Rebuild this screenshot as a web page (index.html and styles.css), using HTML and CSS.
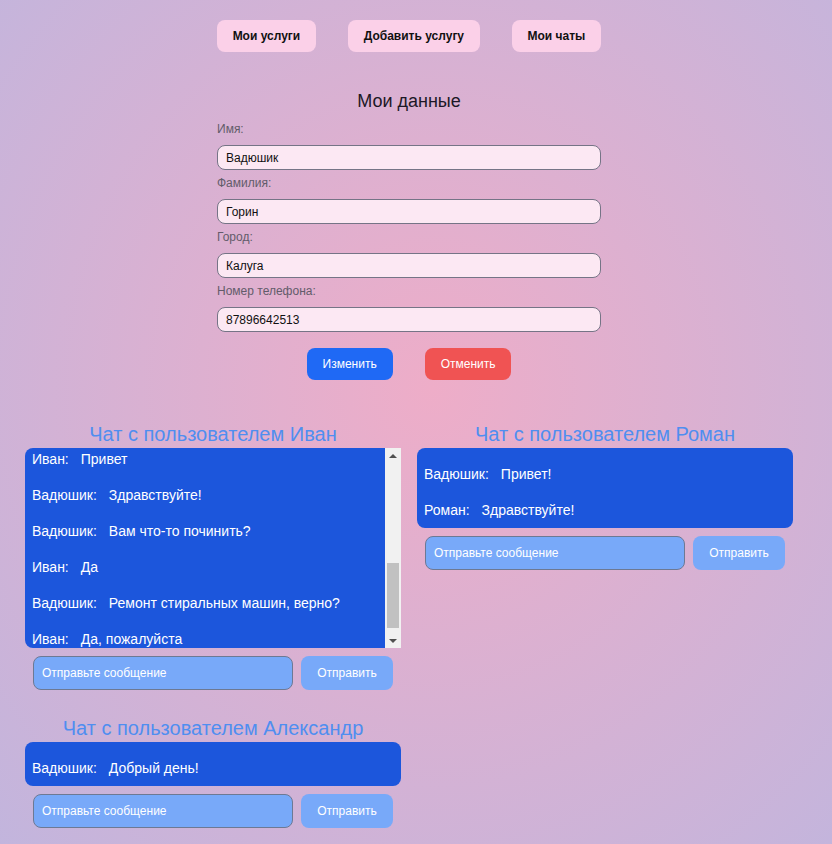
FILE: index.html
```html
<!DOCTYPE html>
<html lang="ru">
<head>
<meta charset="utf-8">
<title>Мои данные</title>
<link rel="stylesheet" href="styles.css">
</head>
<body>
<div class="page">
  <nav class="nav">
    <button class="nav-btn">Мои услуги</button>
    <button class="nav-btn">Добавить услугу</button>
    <button class="nav-btn">Мои чаты</button>
  </nav>

  <section class="profile">
    <h1 class="profile-title">Мои данные</h1>
    <label class="field-label">Имя:</label>
    <input class="field-input" type="text" value="Вадюшик">
    <label class="field-label">Фамилия:</label>
    <input class="field-input" type="text" value="Горин">
    <label class="field-label">Город:</label>
    <input class="field-input" type="text" value="Калуга">
    <label class="field-label">Номер телефона:</label>
    <input class="field-input" type="text" value="87896642513">
    <div class="profile-actions">
      <button class="btn btn-blue">Изменить</button>
      <button class="btn btn-red">Отменить</button>
    </div>
  </section>

  <div class="chats">
    <div class="chat-col">
      <section class="chat">
        <h2 class="chat-title">Чат с пользователем Иван</h2>
        <div class="scroll-wrap">
          <div class="messages messages-scroll" id="chat-ivan">
            <div class="history" aria-hidden="true"></div>
            <p class="msg"><span class="msg-name">Иван:</span>Привет</p>
            <p class="msg"><span class="msg-name">Вадюшик:</span>Здравствуйте!</p>
            <p class="msg"><span class="msg-name">Вадюшик:</span>Вам что-то починить?</p>
            <p class="msg"><span class="msg-name">Иван:</span>Да</p>
            <p class="msg"><span class="msg-name">Вадюшик:</span>Ремонт стиральных машин, верно?</p>
            <p class="msg"><span class="msg-name">Иван:</span>Да, пожалуйста</p>
          </div>
          <div class="scrollbar" aria-hidden="true">
            <div class="sb-arrow">
              <svg width="8" height="4" viewBox="0 0 8 4"><path d="M0 4 L4 0 L8 4 Z" fill="#505050"/></svg>
            </div>
            <div class="sb-track">
              <div class="sb-thumb"></div>
            </div>
            <div class="sb-arrow">
              <svg width="8" height="4" viewBox="0 0 8 4"><path d="M0 0 L8 0 L4 4 Z" fill="#505050"/></svg>
            </div>
          </div>
        </div>
        <div class="send-row">
          <input class="send-input" type="text" placeholder="Отправьте сообщение">
          <button class="send-btn">Отправить</button>
        </div>
      </section>
      <section class="chat">
        <h2 class="chat-title">Чат с пользователем Александр</h2>
        <div class="messages">
          <p class="msg"><span class="msg-name">Вадюшик:</span>Добрый день!</p>
        </div>
        <div class="send-row">
          <input class="send-input" type="text" placeholder="Отправьте сообщение">
          <button class="send-btn">Отправить</button>
        </div>
      </section>
    </div>
    <div class="chat-col">
      <section class="chat">
        <h2 class="chat-title">Чат с пользователем Роман</h2>
        <div class="messages">
          <p class="msg"><span class="msg-name">Вадюшик:</span>Привет!</p>
          <p class="msg"><span class="msg-name">Роман:</span>Здравствуйте!</p>
        </div>
        <div class="send-row">
          <input class="send-input" type="text" placeholder="Отправьте сообщение">
          <button class="send-btn">Отправить</button>
        </div>
      </section>
    </div>
  </div>
</div>
<script src="script.js"></script>
</body>
</html>
```

FILE: styles.css
```css
html, body {
  margin: 0;
  padding: 0;
}
body {
  min-height: 100vh;
  font-family: "Liberation Sans", Arial, sans-serif;
  background: radial-gradient(ellipse farthest-corner at 52% 46%, #eeadc8 0%, #c2b5dd 100%);
  background-attachment: fixed;
}
.page {
  width: 818px;
  padding-top: 20px;
  padding-bottom: 16px;
}
.nav {
  display: flex;
  justify-content: center;
  gap: 32.5px;
}
.nav-btn {
  height: 32px;
  padding: 0 15.5px;
  border: none;
  border-radius: 8px;
  background: #fbd0e8;
  color: #111;
  font: bold 12px "Liberation Sans", Arial, sans-serif;
}
.profile {
  width: 384px;
  margin: 38px auto 0;
  display: flex;
  flex-direction: column;
}
.profile-title {
  margin: 0 0 10px;
  font-size: 18px;
  line-height: 22px;
  font-weight: normal;
  text-align: center;
  color: #1c1826;
}
.field-label {
  font-size: 12px;
  line-height: 14px;
  color: #625c6a;
  margin-bottom: 9px;
}
.field-input {
  box-sizing: border-box;
  width: 100%;
  height: 25px;
  margin: 0 0 6px;
  padding: 0 8px;
  border: 1px solid #757486;
  border-radius: 8px;
  background: #fce8f3;
  color: #111;
  font: 12px "Liberation Sans", Arial, sans-serif;
  outline: none;
}
.profile-actions {
  display: flex;
  justify-content: center;
  gap: 32px;
  margin-top: 10px;
}
.btn {
  height: 32px;
  padding: 0 16px;
  border: none;
  border-radius: 8px;
  color: #fff;
  font: 12px "Liberation Sans", Arial, sans-serif;
}
.btn-blue { background: #1f69f5; }
.btn-red { background: #f05353; }

.chats {
  display: grid;
  grid-template-columns: 376px 376px;
  column-gap: 16px;
  margin: 42px 0 0 25px;
  align-items: start;
}
.chat-col {
  display: flex;
  flex-direction: column;
  gap: 26px;
}
.chat-title {
  margin: 0 0 2px;
  font-size: 20px;
  line-height: 24px;
  font-weight: normal;
  text-align: center;
  color: #4f8ef0;
}
.messages {
  background: #1c56dc;
  border-radius: 8px;
  padding: 8px 0 0;
}
.scroll-wrap {
  position: relative;
  height: 200px;
}
.messages-scroll {
  box-sizing: border-box;
  height: 200px;
  overflow: hidden;
  padding-bottom: 3px;
}
.scrollbar {
  position: absolute;
  top: 0;
  right: 0;
  width: 16px;
  height: 200px;
  background: #f1f1f1;
  display: flex;
  flex-direction: column;
}
.sb-arrow {
  height: 15px;
  display: flex;
  align-items: center;
  justify-content: center;
}
.sb-arrow svg {
  display: block;
}
.sb-track {
  flex: 1;
  padding: 100px 2px 0;
}
.sb-thumb {
  height: 65px;
  background: #c1c1c1;
}
.history {
  height: 293px;
}
.msg {
  margin: 0;
  padding: 10px 8px 10px 7px;
  font-size: 14px;
  line-height: 16px;
  color: #fff;
}
.msg-name {
  margin-right: 12px;
}
.send-row {
  display: flex;
  gap: 8px;
  padding: 0 8px;
  margin-top: 8px;
}
.send-input {
  flex: 1;
  min-width: 0;
  box-sizing: border-box;
  height: 34px;
  padding: 0 8px;
  border: 1px solid #6d7994;
  border-radius: 8px;
  background: #78a9f9;
  color: #fff;
  font: 12px "Liberation Sans", Arial, sans-serif;
  outline: none;
}
.send-input::placeholder {
  color: #fff;
  opacity: 1;
}
.send-btn {
  width: 92px;
  height: 34px;
  border: none;
  border-radius: 8px;
  background: #78a9f9;
  color: #fff;
  font: 12px "Liberation Sans", Arial, sans-serif;
}
```

FILE: script.js
```js
var chat = document.getElementById('chat-ivan');
if (chat) {
  chat.scrollTop = 308;
}
```
